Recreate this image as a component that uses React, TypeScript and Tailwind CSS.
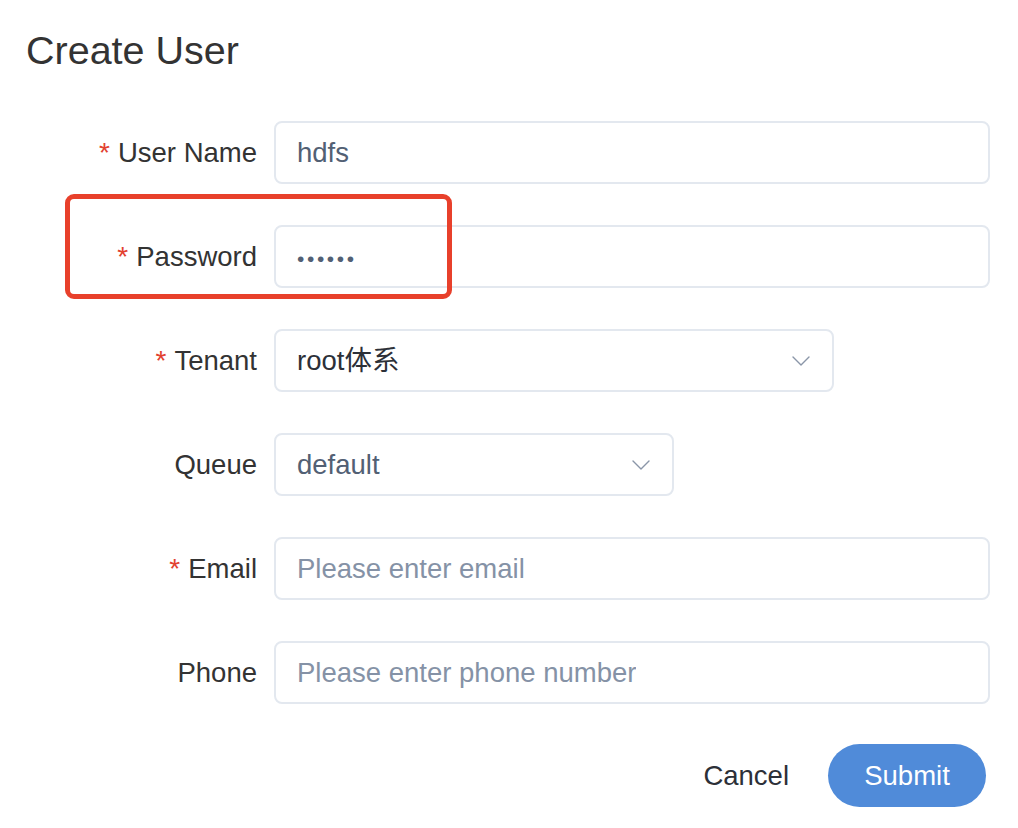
import React from "react";

const font = { fontFamily: '"Liberation Sans", Arial, "Noto Sans CJK SC", sans-serif' };

function Chevron() {
  return (
    <svg width="18" height="10" viewBox="0 0 18 10" fill="none" className="shrink-0">
      <path d="M1 1l8 8 8-8" stroke="#8a96a8" strokeWidth="1.4" strokeLinecap="round" strokeLinejoin="round" />
    </svg>
  );
}

function Label({ text, required }: { text: string; required?: boolean }) {
  return (
    <div className="flex items-center justify-end h-[63px] text-[27.5px] text-[#333]">
      {required && <span className="text-[#e2412f] mr-[8px] text-[28px] leading-none">*</span>}
      {text}
    </div>
  );
}

function Box({ children, width, select }: { children: React.ReactNode; width?: string; select?: boolean }) {
  return (
    <div
      className={`h-[63px] border-2 border-[#e3e8ef] rounded-[8px] flex items-center justify-between pl-[21px] pr-[22px] text-[27.5px] ${width ?? "w-[716px]"}`}
    >
      <span className="truncate">{children}</span>
      {select && <Chevron />}
    </div>
  );
}

export default function App() {
  return (
    <div className="relative w-[1018px] h-[828px] bg-white" style={font}>
      <h1 className="pl-[26px] pt-[26px] text-[39.5px] leading-[48px] text-[#333]">Create User</h1>

      <div className="mt-[47px] grid grid-cols-[257px_1fr] gap-x-[17px] gap-y-[41px]">
        <Label text="User Name" required />
        <Box>
          <span className="text-[#526074]">hdfs</span>
        </Box>

        <Label text="Password" required />
        <Box>
          <span className="text-[#526074] text-[21px] tracking-[2.6px]">••••••</span>
        </Box>

        <Label text="Tenant" required />
        <Box width="w-[560px]" select>
          <span className="text-[#2c3038]">root体系</span>
        </Box>

        <Label text="Queue" />
        <Box width="w-[400px]" select>
          <span className="text-[#526074]">default</span>
        </Box>

        <Label text="Email" required />
        <Box>
          <span className="text-[#8592a6]">Please enter email</span>
        </Box>

        <Label text="Phone" />
        <Box>
          <span className="text-[#8592a6]">Please enter phone number</span>
        </Box>
      </div>

      <div className="mt-[40px] flex items-center justify-end pr-[32px] gap-[39px]">
        <button className="text-[27.5px] text-[#2c3038]">Cancel</button>
        <button className="h-[63px] w-[158px] rounded-full bg-[#508bd9] text-white text-[27.5px]">Submit</button>
      </div>

      <div className="absolute left-[65px] top-[194px] w-[387px] h-[105px] border-[5px] border-[#e8402b] rounded-[9px] pointer-events-none" />
    </div>
  );
}
